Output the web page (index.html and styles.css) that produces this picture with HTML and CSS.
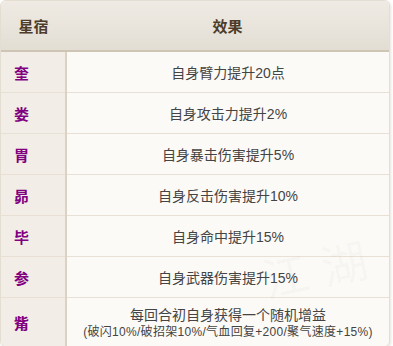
FILE: index.html
```html
<!DOCTYPE html>
<html lang="zh">
<head>
<meta charset="utf-8">
<link rel="stylesheet" href="styles.css">
</head>
<body>
<div class="wrap">
  <table class="tbl">
    <thead>
      <tr><th class="c-name">星宿</th><th>效果</th></tr>
    </thead>
    <tbody>
      <tr><td class="c-name">奎</td><td>自身臂力提升20点</td></tr>
      <tr><td class="c-name">娄</td><td>自身攻击力提升2%</td></tr>
      <tr><td class="c-name">胃</td><td>自身暴击伤害提升5%</td></tr>
      <tr><td class="c-name">昴</td><td>自身反击伤害提升10%</td></tr>
      <tr><td class="c-name">毕</td><td>自身命中提升15%</td></tr>
      <tr><td class="c-name">参</td><td>自身武器伤害提升15%</td></tr>
      <tr class="last"><td class="c-name">觜</td><td><div class="l1">每回合初自身获得一个随机增益</div><div class="l2">(破闪10%/破招架10%/气血回复+200/聚气速度+15%)</div></td></tr>
    </tbody>
  </table>
  <div class="mark">江湖</div>
</div>
</body>
</html>
```

FILE: styles.css
```css
html, body {
  margin: 0;
  padding: 0;
  background: #ffffff;
}
body {
  font-family: "Liberation Sans", "Noto Sans CJK SC", sans-serif;
  width: 393px;
  height: 346px;
  overflow: hidden;
}
.wrap {
  position: relative;
  width: 390px;
  border: 1px solid #e4ddd2;
  border-radius: 6px;
  box-shadow: 1px 1px 3px rgba(120, 100, 70, 0.18);
  overflow: hidden;
  box-sizing: border-box;
  background: #fcfaf6;
}
.tbl {
  width: 100%;
  border-collapse: collapse;
  table-layout: fixed;
}
.tbl th {
  height: 49px;
  padding: 0;
  background: linear-gradient(#efebe4, #e3ded4);
  border-bottom: 2px solid #cfc5b5;
  color: #4d3c2a;
  font-size: 15px;
  font-weight: bold;
  text-align: center;
}
.tbl th.c-name {
  width: 65px;
  border-right: 0;
}
.tbl td {
  height: 40px;
  padding: 0;
  text-align: center;
  color: #444;
  font-size: 14px;
  border-bottom: 1px solid #e8e0d5;
  background: #fcfaf6;
}
.tbl td.c-name {
  text-align: left;
  padding-left: 13px;
  color: #800080;
  font-weight: bold;
  font-size: 15px;
  background: #f2eee7;
  border-right: 2px solid #ddd2c2;
}
.tbl tr.last td {
  height: 48px;
  border-bottom: 0;
}
.l1 {
  font-size: 14px;
  line-height: 18px;
  padding-top: 2px;
}
.l2 {
  font-size: 12px;
  line-height: 16px;
  letter-spacing: 0.3px;
}
.mark {
  position: absolute;
  right: 8px;
  top: 232px;
  font-size: 46px;
  color: rgba(120, 110, 100, 0.045);
  transform: rotate(-12deg);
  letter-spacing: 14px;
  pointer-events: none;
}
```
